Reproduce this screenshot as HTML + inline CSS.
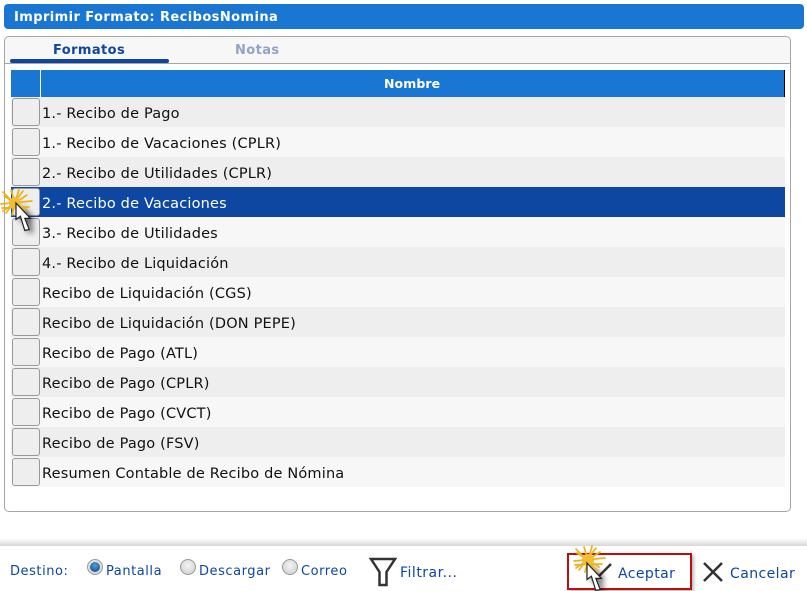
<!DOCTYPE html>
<html><head><meta charset="utf-8"><style>
html,body{margin:0;padding:0;background:#fff}
body{width:807px;height:591px;position:relative;overflow:hidden;font-family:"DejaVu Sans","Liberation Sans",sans-serif}
div,span{position:absolute;white-space:nowrap}
.row{left:11px;width:774px;height:30px;font-size:14.5px;line-height:32px;color:#111;letter-spacing:.18px}
.row span{left:31px;top:.5px}
.g{background:#eee}.w{background:#f7f7f7}
.cb{left:1px;top:1px;width:26px;height:26px;background:#eee;border:1px solid #999;border-radius:3px}
.lb{font-size:13px;color:#0d47a1;letter-spacing:.55px;line-height:16px}
.act{font-size:14px;color:#0d47a1;line-height:17px;letter-spacing:.42px}
.radio{width:14px;height:14px;border-radius:50%;border:1px solid #999;background:radial-gradient(circle at 50% 40%,#f4f4f4,#ccc)}
</style></head><body>
<div style="left:4px;top:4px;width:800px;height:25px;background:#1976d2;border-radius:4px"></div>
<div style="left:14px;top:10px;font-size:13px;font-weight:bold;color:#fff;line-height:15px;letter-spacing:.42px">Imprimir Formato: RecibosNomina</div>
<div style="left:4px;top:36px;width:785px;height:474px;border:1px solid #a5a5a5;border-radius:5px"></div>
<div style="left:5px;top:37px;width:785px;height:26px;background:#f7f7f7;border-bottom:1px solid #a5a5a5;border-radius:5px 5px 0 0"></div>
<div style="left:10px;top:59px;width:159px;height:4px;background:#0d47a1;border-radius:2px"></div>
<div style="left:53px;top:43px;font-size:13px;font-weight:bold;color:#0d47a1;line-height:16px;letter-spacing:.4px">Formatos</div>
<div style="left:235px;top:43px;font-size:13px;font-weight:bold;color:#90a4c8;line-height:16px;letter-spacing:.4px">Notas</div>
<div style="left:11px;top:70px;width:773px;height:27px;background:#1976d2;border-right:1px solid #000"></div>
<div style="left:40px;top:70px;width:1px;height:27px;background:#fff"></div>
<div style="left:384px;top:76px;font-size:12.5px;font-weight:bold;color:#fff;line-height:16px;letter-spacing:.1px">Nombre</div>
<div class="row g" style="top:97px"><div class="cb"></div><span>1.- Recibo de Pago</span></div>
<div class="row w" style="top:127px"><div class="cb"></div><span>1.- Recibo de Vacaciones (CPLR)</span></div>
<div class="row g" style="top:157px"><div class="cb"></div><span>2.- Recibo de Utilidades (CPLR)</span></div>
<div class="row" style="top:187px;background:#0d47a1;color:#fff"><div class="cb"></div><span>2.- Recibo de Vacaciones</span></div>
<div class="row w" style="top:217px"><div class="cb"></div><span>3.- Recibo de Utilidades</span></div>
<div class="row g" style="top:247px"><div class="cb"></div><span>4.- Recibo de Liquidación</span></div>
<div class="row w" style="top:277px"><div class="cb"></div><span>Recibo de Liquidación (CGS)</span></div>
<div class="row g" style="top:307px"><div class="cb"></div><span>Recibo de Liquidación (DON PEPE)</span></div>
<div class="row w" style="top:337px"><div class="cb"></div><span>Recibo de Pago (ATL)</span></div>
<div class="row g" style="top:367px"><div class="cb"></div><span>Recibo de Pago (CPLR)</span></div>
<div class="row w" style="top:397px"><div class="cb"></div><span>Recibo de Pago (CVCT)</span></div>
<div class="row g" style="top:427px"><div class="cb"></div><span>Recibo de Pago (FSV)</span></div>
<div class="row w" style="top:457px"><div class="cb"></div><span>Resumen Contable de Recibo de Nómina</span></div>

<svg style="position:absolute;left:0;top:185px" width="50" height="55" viewBox="0 0 50 55">
<defs><filter id="b" x="-60%" y="-60%" width="220%" height="220%"><feGaussianBlur stdDeviation="3"/></filter></defs>
<path transform="translate(20,20) scale(1.100)" d="M0 0L0 15L4 12L8 25L12 24L8 14L13 14Z" fill="#111" opacity=".85" filter="url(#b)"/>
<g stroke="#eeb11c" stroke-width="1.700" stroke-linecap="round" transform="translate(15,18)">
<path d="M-11 -7L11 7M-4 -13L4 13M4 -14L-3 12M12 -8L-12 8M-14 1L17 -2M-12 -11L9 11M8 -12L-9 10M-13 5L14 4"/>
<circle r="6" fill="#f0bd35" stroke="none"/>
</g>
<path transform="translate(16,18) scale(1.100)" d="M0 0L0 15L4 12L8 25L12 24L8 14L13 14Z" fill="#fff" stroke="#222" stroke-width="1.100"/>
</svg>

<div style="left:0;top:538px;width:807px;height:8px;background:linear-gradient(#fff,#d8d8d8)"></div>
<div style="left:0;top:546px;width:807px;height:45px;background:#fff"></div>
<div class="lb" style="left:10px;top:564px">Destino:</div>
<div class="radio" style="left:87px;top:559px"></div>
<div style="left:90px;top:562px;width:10px;height:10px;border-radius:50%;background:radial-gradient(circle at 50% 35%,#4aa3df,#0b3f73)"></div>
<div class="lb" style="left:106px;top:564px">Pantalla</div>
<div class="radio" style="left:180px;top:559px"></div>
<div class="lb" style="left:199px;top:564px">Descargar</div>
<div class="radio" style="left:282px;top:559px"></div>
<div class="lb" style="left:301px;top:564px">Correo</div>
<svg style="position:absolute;left:369px;top:557px" width="28" height="30" viewBox="0 0 28 30"><path d="M2 2H26L17.500 15V28H10.500V15Z" fill="none" stroke="#333" stroke-width="2.500"/></svg>
<div class="act" style="left:400px;top:565px;letter-spacing:.5px">Filtrar...</div>

<div style="left:567px;top:553px;width:121px;height:33px;border:2px solid #b80f0f;box-shadow:2px 2px 3px #bbb"></div>
<svg style="position:absolute;left:565px;top:545px" width="60" height="46" viewBox="0 0 60 46">
<defs><filter id="c" x="-60%" y="-60%" width="220%" height="220%"><feGaussianBlur stdDeviation="3"/></filter></defs>
<path d="M30 35L46 19" fill="none" stroke="#333" stroke-width="2.500"/>
<path transform="translate(26,20) scale(1.100)" d="M0 0L0 15L4 12L8 25L12 24L8 14L13 14Z" fill="#111" opacity=".75" filter="url(#c)"/>
<g stroke="#eeb11c" stroke-width="1.700" stroke-linecap="round" transform="translate(23,15)">
<path d="M-11 -7L11 7M-4 -13L4 13M4 -14L-3 12M12 -8L-12 8M-14 1L17 -2M-12 -11L9 11M8 -12L-9 10M-13 5L14 4"/>
<circle r="6" fill="#f0bd35" stroke="none"/>
</g>
<path transform="translate(22,18) scale(1.100)" d="M0 0L0 15L4 12L8 25L12 24L8 14L13 14Z" fill="#fff" stroke="#222" stroke-width="1.100"/>
</svg>
<div class="act" style="left:618px;top:566px">Aceptar</div>
<svg style="position:absolute;left:702px;top:561px" width="22" height="22" viewBox="0 0 22 22"><path d="M2 2L20 20M20 2L2 20" stroke="#333" stroke-width="2.500" fill="none"/></svg>
<div class="act" style="left:730px;top:566px">Cancelar</div>
</body></html>
